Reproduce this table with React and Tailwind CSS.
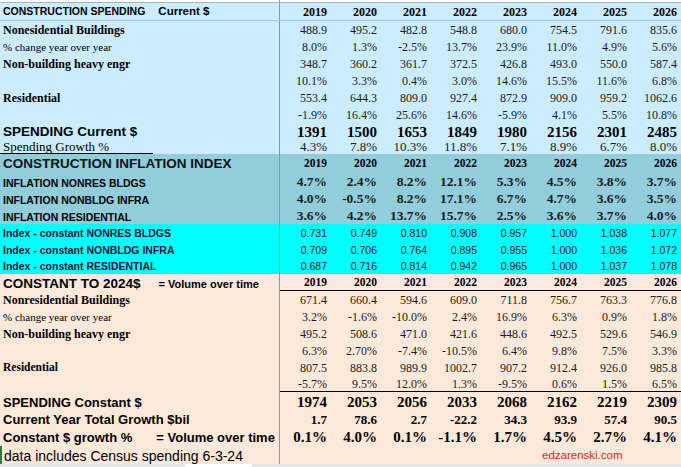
const serif = "font-['Liberation_Serif','Times_New_Roman',serif]";
const sans = "font-['Liberation_Sans',Arial,sans-serif]";

const years = ["2019", "2020", "2021", "2022", "2023", "2024", "2025", "2026"];

const current = {
  nonres: ["488.9", "495.2", "482.8", "548.8", "680.0", "754.5", "791.6", "835.6"],
  nonresChg: ["8.0%", "1.3%", "-2.5%", "13.7%", "23.9%", "11.0%", "4.9%", "5.6%"],
  heavy: ["348.7", "360.2", "361.7", "372.5", "426.8", "493.0", "550.0", "587.4"],
  heavyChg: ["10.1%", "3.3%", "0.4%", "3.0%", "14.6%", "15.5%", "11.6%", "6.8%"],
  res: ["553.4", "644.3", "809.0", "927.4", "872.9", "909.0", "959.2", "1062.6"],
  resChg: ["-1.9%", "16.4%", "25.6%", "14.6%", "-5.9%", "4.1%", "5.5%", "10.8%"],
  total: ["1391", "1500", "1653", "1849", "1980", "2156", "2301", "2485"],
  growth: ["4.3%", "7.8%", "10.3%", "11.8%", "7.1%", "8.9%", "6.7%", "8.0%"],
};

const inflation = [
  ["INFLATION NONRES BLDGS", ["4.7%", "2.4%", "8.2%", "12.1%", "5.3%", "4.5%", "3.8%", "3.7%"], "h-[18px]"],
  ["INFLATION NONBLDG INFRA", ["4.0%", "-0.5%", "8.2%", "17.1%", "6.7%", "4.7%", "3.6%", "3.5%"], "h-[17px]"],
  ["INFLATION RESIDENTIAL", ["3.6%", "4.2%", "13.7%", "15.7%", "2.5%", "3.6%", "3.7%", "4.0%"], "h-[17px]"],
];

const indexes = [
  ["Index - constant NONRES BLDGS", ["0.731", "0.749", "0.810", "0.908", "0.957", "1.000", "1.038", "1.077"], "h-[17px]"],
  ["Index - constant NONBLDG INFRA", ["0.709", "0.706", "0.764", "0.895", "0.955", "1.000", "1.036", "1.072"], "h-[17px]"],
  ["Index - constant RESIDENTIAL", ["0.687", "0.716", "0.814", "0.942", "0.965", "1.000", "1.037", "1.078"], "h-[16px]"],
];

const constant = {
  nonres: ["671.4", "660.4", "594.6", "609.0", "711.8", "756.7", "763.3", "776.8"],
  nonresChg: ["3.2%", "-1.6%", "-10.0%", "2.4%", "16.9%", "6.3%", "0.9%", "1.8%"],
  heavy: ["495.2", "508.6", "471.0", "421.6", "448.6", "492.5", "529.6", "546.9"],
  heavyChg: ["6.3%", "2.70%", "-7.4%", "-10.5%", "6.4%", "9.8%", "7.5%", "3.3%"],
  res: ["807.5", "883.8", "989.9", "1002.7", "907.2", "912.4", "926.0", "985.8"],
  resChg: ["-5.7%", "9.5%", "12.0%", "1.3%", "-9.5%", "0.6%", "1.5%", "6.5%"],
  total: ["1974", "2053", "2056", "2033", "2068", "2162", "2219", "2309"],
  dollars: ["1.7", "78.6", "2.7", "-22.2", "34.3", "93.9", "57.4", "90.5"],
  pct: ["0.1%", "4.0%", "0.1%", "-1.1%", "1.7%", "4.5%", "2.7%", "4.1%"],
};

const Row = ({ h, label, values, valueCls, valuesExtra = "" }) => (
  <div className={`flex ${h}`}>
    <div className="w-[280px] shrink-0 border-r border-[#8c9aa4] flex items-center pl-[3px] pt-px overflow-hidden whitespace-nowrap">
      {label}
    </div>
    <div className={`flex flex-1 items-center pt-px ${valuesExtra}`}>
      {values.map((v, i) => (
        <div key={i} className={`w-[50px] shrink-0 text-right pr-[3px] whitespace-nowrap ${valueCls}`}>
          {v}
        </div>
      ))}
    </div>
  </div>
);

const boldLabel = `${serif} font-bold text-[12px]`;
const smallLabel = `${serif} text-[11px]`;
const num = `${serif} text-[12px] text-[#1a1a1a]`;

export default function App() {
  return (
    <div className="w-[681px] h-[467px] overflow-hidden bg-[#ececec] text-black leading-none">
      <div className="h-[3px] flex bg-white border-b border-[#a9b4bb]">
        <div className="w-[280px] border-r border-[#8c9aa4]" />
      </div>

      {/* current dollars */}
      <div className="bg-[#ccecff]">
        <Row
          h="h-[18px] border-b border-[#a8c6d8]"
          label={
            <span className={`${sans} font-bold text-[10.5px]`}>
              CONSTRUCTION SPENDING
              <span className="ml-[13px] text-[11.5px]">Current $</span>
            </span>
          }
          values={years}
          valueCls={`${serif} font-bold text-[12px]`}
        />
        <Row h="h-[17px]" label={<span className={boldLabel}>Nonesidential Buildings</span>} values={current.nonres} valueCls={num} />
        <Row h="h-[17px]" label={<span className={smallLabel}>% change year over year</span>} values={current.nonresChg} valueCls={num} />
        <Row h="h-[17px]" label={<span className={boldLabel}>Non-building heavy engr</span>} values={current.heavy} valueCls={num} />
        <Row h="h-[17px]" label="" values={current.heavyChg} valueCls={num} />
        <Row h="h-[17px]" label={<span className={boldLabel}>Residential</span>} values={current.res} valueCls={num} />
        <Row h="h-[17px]" label="" values={current.resChg} valueCls={num} />
        <Row
          h="h-[17px]"
          label={<span className={`${sans} font-bold text-[13.5px]`}>SPENDING Current $</span>}
          values={current.total}
          valueCls={`${serif} font-bold text-[15px]`}
        />
        <div className="flex h-[14px]">
          <div className="w-[280px] shrink-0 border-r border-[#8c9aa4] flex flex-col">
            <div className={`flex-1 pl-[3px] ${serif} text-[13px]`}>Spending Growth %</div>
            <div className="h-px w-[153px] bg-black" />
          </div>
          <div className="flex flex-1">
            {current.growth.map((v, i) => (
              <div key={i} className={`w-[50px] shrink-0 text-right pr-[3px] ${serif} text-[13px] text-[#1a1a1a]`}>
                {v}
              </div>
            ))}
          </div>
        </div>
      </div>

      {/* inflation index */}
      <div className="bg-[#92cddc]">
        <Row
          h="h-[18px]"
          label={<span className={`${sans} font-bold text-[13.5px] text-[#111]`}>CONSTRUCTION INFLATION INDEX</span>}
          values={years}
          valueCls={`${serif} font-bold text-[11.5px]`}
        />
        {inflation.map(([label, vals, h]) => (
          <Row
            key={label}
            h={h}
            label={<span className={`${sans} font-bold text-[10.5px] pt-[3px]`}>{label}</span>}
            values={vals}
            valueCls={`${serif} font-bold text-[13.5px] text-[#1a1a1a]`}
          />
        ))}
      </div>

      <div className="bg-[#00ffff]">
        {indexes.map(([label, vals, h]) => (
          <Row
            key={label}
            h={h}
            label={<span className={`${sans} font-bold text-[10.5px] text-[#141432]`}>{label}</span>}
            values={vals}
            valueCls={`${sans} text-[10.5px] text-[#222]`}
          />
        ))}
      </div>

      {/* constant dollars */}
      <div className="bg-[#fde9d9]">
        <Row
          h="h-[17px]"
          label={
            <span className={`${sans} font-bold`}>
              <span className="text-[13.5px]">CONSTANT TO 2024$</span>
              <span className="ml-[18px] text-[11px]">= Volume over time</span>
            </span>
          }
          values={years}
          valueCls={`${serif} font-bold text-[11.5px]`}
          valuesExtra="border-b border-black"
        />
        <Row h="h-[17px]" label={<span className={boldLabel}>Nonresidential Buildings</span>} values={constant.nonres} valueCls={num} />
        <Row h="h-[17px]" label={<span className={smallLabel}>% change year over year</span>} values={constant.nonresChg} valueCls={num} />
        <Row h="h-[17px]" label={<span className={boldLabel}>Non-building heavy engr</span>} values={constant.heavy} valueCls={num} />
        <Row h="h-[17px]" label="" values={constant.heavyChg} valueCls={num} />
        <Row h="h-[17px]" label={<span className={`${serif} font-bold text-[11.5px]`}>Residential</span>} values={constant.res} valueCls={num} />
        <Row
          h="h-[16px]"
          label=""
          values={constant.resChg}
          valueCls={num}
          valuesExtra="border-b border-black"
        />
        <Row
          h="h-[18px]"
          label={<span className={`${sans} font-bold text-[13px] pt-[2px]`}>SPENDING Constant $</span>}
          values={constant.total}
          valueCls={`${serif} font-bold text-[15px] pt-[2px]`}
        />
        <Row
          h="h-[18px]"
          label={<span className={`${sans} font-bold text-[13px]`}>Current Year Total Growth $bil</span>}
          values={constant.dollars}
          valueCls={`${serif} font-bold text-[13px]`}
        />
        <Row
          h="h-[18px]"
          label={
            <span className={`${sans} font-bold text-[13px]`}>
              Constant $ growth %<span className="ml-[24px]">= Volume over time</span>
            </span>
          }
          values={constant.pct}
          valueCls={`${serif} font-bold text-[15px]`}
        />
        <div className="flex h-[18px]">
          <div className="w-[280px] shrink-0 border-r border-[#8c9aa4] border-l-2 border-l-[#2d7a34] flex items-center pl-[2px] pt-px">
            <span className={`${sans} text-[14px]`}>data includes Census spending 6-3-24</span>
          </div>
          <div className="flex flex-1 items-center pt-[2px] pl-[262px]">
            <span className={`${sans} text-[11.5px] text-[#e3232d]`}>edzarenski.com</span>
          </div>
        </div>
      </div>

      <div className="flex h-[3px]">
        <div className="w-[185px] bg-[#e6e6e6]" />
        <div className="w-[67px] bg-white" />
        <div className="flex-1 bg-[#e6e6e6]" />
      </div>
    </div>
  );
}
